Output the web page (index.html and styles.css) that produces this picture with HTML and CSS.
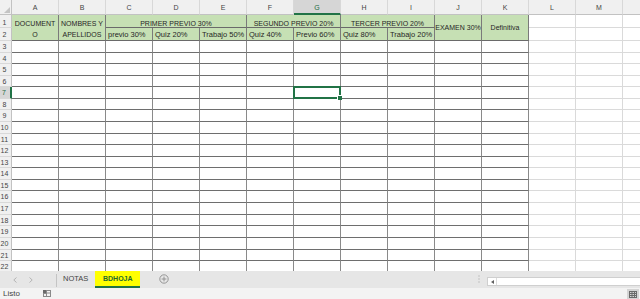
FILE: index.html
```html
<!DOCTYPE html>
<html lang="es">
<head>
<meta charset="utf-8">
<title>BDHOJA</title>
<link rel="stylesheet" href="styles.css">
</head>
<body>
<div class="app">
  <div class="sheet">
    <div class="corner"></div>
    <div class="ch">A</div><div class="ch">B</div><div class="ch">C</div><div class="ch">D</div><div class="ch">E</div><div class="ch">F</div><div class="ch on">G</div><div class="ch">H</div><div class="ch">I</div><div class="ch">J</div><div class="ch">K</div><div class="ch">L</div><div class="ch">M</div><div class="ch"></div>

    <div class="rh r1">1</div>
    <div class="hd m2 two">DOCUMENT<br>O</div>
    <div class="hd m2 two">NOMBRES Y<br>APELLIDOS</div>
    <div class="hd top s3">PRIMER PREVIO 30%</div>
    <div class="hd top s2">SEGUNDO PREVIO 20%</div>
    <div class="hd top s2">TERCER PREVIO 20%</div>
    <div class="hd m2">EXAMEN 30%</div>
    <div class="hd m2">Definitiva</div>
    <div class="e"></div><div class="e"></div><div class="e"></div>

    <div class="rh">2</div>
    <div class="hd sub">previo 30%</div>
    <div class="hd sub">Quiz 20%</div>
    <div class="hd sub">Trabajo 50%</div>
    <div class="hd sub">Quiz 40%</div>
    <div class="hd sub">Previo 60%</div>
    <div class="hd sub">Quiz 80%</div>
    <div class="hd sub">Trabajo 20%</div>
    <div class="e"></div><div class="e"></div><div class="e"></div>

    <div class="rh">3</div><div class="c"></div><div class="c"></div><div class="c"></div><div class="c"></div><div class="c"></div><div class="c"></div><div class="c"></div><div class="c"></div><div class="c"></div><div class="c"></div><div class="c"></div><div class="e"></div><div class="e"></div><div class="e"></div>
    <div class="rh">4</div><div class="c"></div><div class="c"></div><div class="c"></div><div class="c"></div><div class="c"></div><div class="c"></div><div class="c"></div><div class="c"></div><div class="c"></div><div class="c"></div><div class="c"></div><div class="e"></div><div class="e"></div><div class="e"></div>
    <div class="rh">5</div><div class="c"></div><div class="c"></div><div class="c"></div><div class="c"></div><div class="c"></div><div class="c"></div><div class="c"></div><div class="c"></div><div class="c"></div><div class="c"></div><div class="c"></div><div class="e"></div><div class="e"></div><div class="e"></div>
    <div class="rh">6</div><div class="c"></div><div class="c"></div><div class="c"></div><div class="c"></div><div class="c"></div><div class="c"></div><div class="c"></div><div class="c"></div><div class="c"></div><div class="c"></div><div class="c"></div><div class="e"></div><div class="e"></div><div class="e"></div>
    <div class="rh on">7</div><div class="c"></div><div class="c"></div><div class="c"></div><div class="c"></div><div class="c"></div><div class="c"></div><div class="c sel"></div><div class="c"></div><div class="c"></div><div class="c"></div><div class="c"></div><div class="e"></div><div class="e"></div><div class="e"></div>
    <div class="rh">8</div><div class="c"></div><div class="c"></div><div class="c"></div><div class="c"></div><div class="c"></div><div class="c"></div><div class="c"></div><div class="c"></div><div class="c"></div><div class="c"></div><div class="c"></div><div class="e"></div><div class="e"></div><div class="e"></div>
    <div class="rh">9</div><div class="c"></div><div class="c"></div><div class="c"></div><div class="c"></div><div class="c"></div><div class="c"></div><div class="c"></div><div class="c"></div><div class="c"></div><div class="c"></div><div class="c"></div><div class="e"></div><div class="e"></div><div class="e"></div>
    <div class="rh">10</div><div class="c"></div><div class="c"></div><div class="c"></div><div class="c"></div><div class="c"></div><div class="c"></div><div class="c"></div><div class="c"></div><div class="c"></div><div class="c"></div><div class="c"></div><div class="e"></div><div class="e"></div><div class="e"></div>
    <div class="rh">11</div><div class="c"></div><div class="c"></div><div class="c"></div><div class="c"></div><div class="c"></div><div class="c"></div><div class="c"></div><div class="c"></div><div class="c"></div><div class="c"></div><div class="c"></div><div class="e"></div><div class="e"></div><div class="e"></div>
    <div class="rh">12</div><div class="c"></div><div class="c"></div><div class="c"></div><div class="c"></div><div class="c"></div><div class="c"></div><div class="c"></div><div class="c"></div><div class="c"></div><div class="c"></div><div class="c"></div><div class="e"></div><div class="e"></div><div class="e"></div>
    <div class="rh">13</div><div class="c"></div><div class="c"></div><div class="c"></div><div class="c"></div><div class="c"></div><div class="c"></div><div class="c"></div><div class="c"></div><div class="c"></div><div class="c"></div><div class="c"></div><div class="e"></div><div class="e"></div><div class="e"></div>
    <div class="rh">14</div><div class="c"></div><div class="c"></div><div class="c"></div><div class="c"></div><div class="c"></div><div class="c"></div><div class="c"></div><div class="c"></div><div class="c"></div><div class="c"></div><div class="c"></div><div class="e"></div><div class="e"></div><div class="e"></div>
    <div class="rh">15</div><div class="c"></div><div class="c"></div><div class="c"></div><div class="c"></div><div class="c"></div><div class="c"></div><div class="c"></div><div class="c"></div><div class="c"></div><div class="c"></div><div class="c"></div><div class="e"></div><div class="e"></div><div class="e"></div>
    <div class="rh">16</div><div class="c"></div><div class="c"></div><div class="c"></div><div class="c"></div><div class="c"></div><div class="c"></div><div class="c"></div><div class="c"></div><div class="c"></div><div class="c"></div><div class="c"></div><div class="e"></div><div class="e"></div><div class="e"></div>
    <div class="rh">17</div><div class="c"></div><div class="c"></div><div class="c"></div><div class="c"></div><div class="c"></div><div class="c"></div><div class="c"></div><div class="c"></div><div class="c"></div><div class="c"></div><div class="c"></div><div class="e"></div><div class="e"></div><div class="e"></div>
    <div class="rh">18</div><div class="c"></div><div class="c"></div><div class="c"></div><div class="c"></div><div class="c"></div><div class="c"></div><div class="c"></div><div class="c"></div><div class="c"></div><div class="c"></div><div class="c"></div><div class="e"></div><div class="e"></div><div class="e"></div>
    <div class="rh">19</div><div class="c"></div><div class="c"></div><div class="c"></div><div class="c"></div><div class="c"></div><div class="c"></div><div class="c"></div><div class="c"></div><div class="c"></div><div class="c"></div><div class="c"></div><div class="e"></div><div class="e"></div><div class="e"></div>
    <div class="rh">20</div><div class="c"></div><div class="c"></div><div class="c"></div><div class="c"></div><div class="c"></div><div class="c"></div><div class="c"></div><div class="c"></div><div class="c"></div><div class="c"></div><div class="c"></div><div class="e"></div><div class="e"></div><div class="e"></div>
    <div class="rh">21</div><div class="c"></div><div class="c"></div><div class="c"></div><div class="c"></div><div class="c"></div><div class="c"></div><div class="c"></div><div class="c"></div><div class="c"></div><div class="c"></div><div class="c"></div><div class="e"></div><div class="e"></div><div class="e"></div>
    <div class="rh">22</div><div class="c"></div><div class="c"></div><div class="c"></div><div class="c"></div><div class="c"></div><div class="c"></div><div class="c"></div><div class="c"></div><div class="c"></div><div class="c"></div><div class="c"></div><div class="e"></div><div class="e"></div><div class="e"></div>
  </div>

  <div class="tabbar">
    <div class="nav">
      <svg class="chev" width="4" height="6" viewBox="0 0 4 6"><polyline points="3.5,0.5 0.8,3 3.5,5.5" /></svg>
      <svg class="chev" width="4" height="6" viewBox="0 0 4 6"><polyline points="0.5,0.5 3.2,3 0.5,5.5" /></svg>
    </div>
    <div class="sep"></div>
    <div class="tab">NOTAS</div>
    <div class="tab active">BDHOJA</div>
    <div class="add">
      <svg width="10" height="10" viewBox="0 0 10 10"><circle cx="5" cy="5" r="4.2" /><line x1="5" y1="2.6" x2="5" y2="7.4" /><line x1="2.6" y1="5" x2="7.4" y2="5" /></svg>
    </div>
    <div class="spacer"></div>
    <div class="dots">
      <svg width="2" height="8" viewBox="0 0 2 8"><rect x="0.5" y="0.5" width="1" height="1" /><rect x="0.5" y="3.5" width="1" height="1" /><rect x="0.5" y="6.5" width="1" height="1" /></svg>
    </div>
    <div class="hscroll">
      <div class="sbtn">
        <svg width="3" height="4" viewBox="0 0 3 4"><polygon points="3,0 0,2 3,4" /></svg>
      </div>
      <div class="track"></div>
    </div>
  </div>

  <div class="status">
    <span class="ready">Listo</span>
    <svg class="macro" width="8" height="7" viewBox="0 0 8 7">
      <rect x="0" y="0" width="3" height="3" fill="#6a6a6a" />
      <rect x="3.5" y="0.5" width="4" height="6" fill="none" stroke="#8a8a8a" />
      <rect x="0.5" y="3.5" width="3" height="3" fill="none" stroke="#8a8a8a" />
      <line x1="3.5" y1="3" x2="7.5" y2="3" stroke="#8a8a8a" />
    </svg>
    <div class="spacer"></div>
    <div class="view">
      <svg width="8" height="7" viewBox="0 0 8 7" fill="none" stroke="#6a6a6a">
        <rect x="0.5" y="0.5" width="7" height="6" />
        <line x1="0.5" y1="2.5" x2="7.5" y2="2.5" />
        <line x1="0.5" y1="4.5" x2="7.5" y2="4.5" />
        <line x1="3" y1="0.5" x2="3" y2="6.5" />
        <line x1="5.5" y1="0.5" x2="5.5" y2="6.5" />
      </svg>
    </div>
  </div>
</div>
</body>
</html>
```

FILE: styles.css
```css
* {
  box-sizing: border-box;
  margin: 0;
  padding: 0;
}

html, body {
  width: 640px;
  height: 299px;
  overflow: hidden;
  background: #ffffff;
}

body {
  font-family: "Liberation Sans", Arial, sans-serif;
  color: #222222;
}

.app {
  display: flex;
  flex-direction: column;
  width: 640px;
  height: 299px;
}

/* ---------- sheet grid ---------- */
.sheet {
  flex: 0 0 271px;
  height: 271px;
  width: 640px;
  overflow: hidden;
  display: grid;
  grid-template-columns: 12px repeat(14, 47px);
  grid-template-rows: 15px 13px 13px 12px 11px 12px 11px 12px 11px 12px 12px 11px 12px 11px 12px 11px 12px 12px 11px 12px 12px 11px 12px;
}

.corner {
  position: relative;
  background: #f0f0f0;
  border-right: 1px solid #c2c2c2;
  border-bottom: 1px solid #c2c2c2;
}

.corner::after {
  content: "";
  position: absolute;
  right: 1px;
  bottom: 1px;
  width: 0;
  height: 0;
  border-left: 6px solid transparent;
  border-bottom: 6px solid #c4c4c4;
}

.ch {
  background: #f0f0f0;
  border-right: 1px solid #d8d8d8;
  border-bottom: 1px solid #c2c2c2;
  font-size: 7px;
  line-height: 9px;
  color: #444444;
  text-align: center;
  padding-top: 3px;
}

.ch.on {
  background: #d6d6d6;
  color: #1d6b3f;
  border-bottom: 2px solid #217346;
}

.rh {
  background: #f0f0f0;
  border-right: 1px solid #c2c2c2;
  border-bottom: 1px solid #d8d8d8;
  font-size: 7px;
  color: #444444;
  display: flex;
  align-items: center;
  justify-content: center;
  padding-right: 2px;
}

.rh.r1 {
  padding-top: 3px;
}

.rh.on {
  background: #d6d6d6;
  color: #1d6b3f;
  border-right: 2px solid #217346;
}

/* header cells */
.hd {
  background: #c6e0b4;
  border-right: 1px solid #7a7a7a;
  border-bottom: 1px solid #6a6a6a;
  display: flex;
  align-items: center;
  justify-content: center;
  text-align: center;
  font-size: 7px;
  line-height: 9px;
  color: #262626;
  white-space: nowrap;
  overflow: hidden;
}

.m2 { grid-row: span 2; }
.s2 { grid-column: span 2; }
.s3 { grid-column: span 3; }

.top {
  padding-top: 5px;
}

.two {
  line-height: 11px;
  padding-top: 2px;
}

.sub {
  justify-content: flex-start;
  padding-left: 2px;
  font-size: 7.5px;
  overflow: visible;
}

/* body cells */
.c {
  border-right: 1px solid #8a8a8a;
  border-bottom: 1px solid #6e6e6e;
}

.e {
  border-right: 1px solid #dadada;
  border-bottom: 1px solid #dadada;
}

.sel {
  position: relative;
}

.sel::before {
  content: "";
  position: absolute;
  left: -1px;
  top: -1px;
  right: -1px;
  bottom: -1px;
  border: 2px solid #217346;
}

.sel::after {
  content: "";
  position: absolute;
  right: -2px;
  bottom: -2px;
  width: 4px;
  height: 4px;
  background: #217346;
  border-left: 1px solid #ffffff;
  border-top: 1px solid #ffffff;
}

/* ---------- sheet tabs ---------- */
.tabbar {
  flex: 0 0 17px;
  height: 17px;
  display: flex;
  align-items: stretch;
  background: #e6e6e6;
}

.nav {
  width: 56px;
  display: flex;
  align-items: center;
  padding-left: 13px;
  gap: 12px;
}

.chev polyline {
  fill: none;
  stroke: #b4b4b4;
  stroke-width: 1;
}

.sep {
  width: 1px;
  background: #c4c4c4;
  margin: 3px 0 1px;
}

.tab {
  display: flex;
  align-items: center;
  font-size: 7.5px;
  color: #444444;
  padding: 0 7px 2px 6px;
}

.tab.active {
  width: 45px;
  justify-content: center;
  padding: 0;
  background: #ffff00;
  color: #1f6a30;
  font-weight: bold;
  font-size: 7px;
  border-bottom: 2px solid #217346;
}

.add {
  margin-left: 19px;
  display: flex;
  align-items: center;
  padding-bottom: 2px;
}

.add svg {
  fill: none;
  stroke: #8c8c8c;
  stroke-width: 0.9;
}

.spacer {
  flex: 1;
}

.dots {
  display: flex;
  align-items: center;
  padding-bottom: 2px;
  margin-right: 7px;
}

.dots svg {
  fill: #a0a0a0;
}

.hscroll {
  width: 153px;
  height: 9px;
  margin-top: 6px;
  display: flex;
  background: #ffffff;
  border: 1px solid #cfcfcf;
  border-right: none;
}

.sbtn {
  width: 9px;
  display: flex;
  align-items: center;
  justify-content: center;
  border-right: 1px solid #dcdcdc;
}

.sbtn svg {
  fill: #606060;
}

.track {
  flex: 1;
}

/* ---------- status bar ---------- */
.status {
  flex: 0 0 11px;
  height: 11px;
  display: flex;
  align-items: center;
  background: #f3f3f3;
}

.ready {
  font-size: 8px;
  color: #444444;
  padding-left: 3px;
}

.macro {
  margin-left: 23px;
}

.view {
  width: 12px;
  height: 10px;
  margin-top: 1px;
  margin-right: 1px;
  background: #d4d4d4;
  display: flex;
  align-items: center;
  justify-content: center;
}
```
